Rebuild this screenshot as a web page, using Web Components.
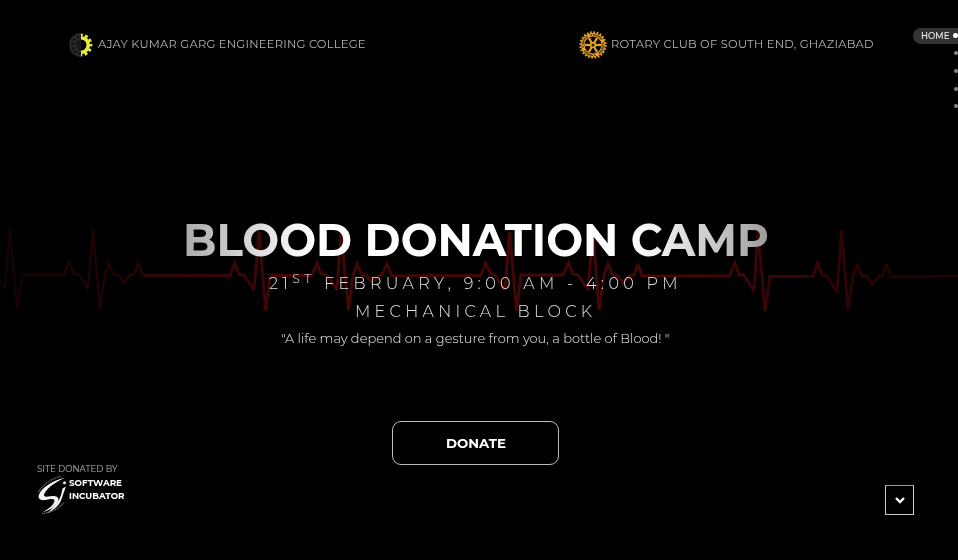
<!DOCTYPE html>
<html lang="en">
<head>
<meta charset="utf-8">
<title>Blood Donation Camp</title>
<style>
html,body{margin:0;background:#000;color:#fff;font-family:Montserrat,Inter,"Open Sans",sans-serif}
body{width:958px;height:560px;overflow:hidden}
</style>
</head>
<body>
<camp-page></camp-page>
<script>
// A single line of text set to a given width; `cap` is the height of its box, whose bottom is the baseline.
// With `tracked`, only the letter spacing grows. A part marked ^...^ is raised and smaller.
class FitText extends HTMLElement{
  connectedCallback(){
    const w=+this.getAttribute('w'), h=+this.getAttribute('cap');
    const root=this.attachShadow({mode:'open'});
    root.innerHTML=`<style>:host{display:block;flex:none;will-change:transform}svg{display:block;overflow:visible}text{fill:var(--ink,currentColor)}</style>
    <svg width="${w}" height="${h}"><defs><linearGradient id="fade" gradientUnits="userSpaceOnUse" x1="0" y1="0" x2="${w}" y2="0"><stop offset="0" stop-color="#a9a9a9"/><stop offset=".1" stop-color="#d2d2d2"/><stop offset=".22" stop-color="#fff"/><stop offset=".77" stop-color="#fff"/><stop offset=".9" stop-color="#ccc"/><stop offset="1" stop-color="#9b9b9b"/></linearGradient></defs><text x="0" y="${h}" textLength="${w}" lengthAdjust="${this.hasAttribute('tracked')?'spacing':'spacingAndGlyphs'}"></text></svg>`;
    const t=root.querySelector('text');
    this.getAttribute('text').split('^').forEach((s,i)=>{
      if(!i){t.append(s);return}
      const sp=document.createElementNS('http://www.w3.org/2000/svg','tspan');
      sp.textContent=s; sp.setAttribute('dy',i%2?-6.5:6.5);
      if(i%2) sp.setAttribute('font-size','12.5');
      t.append(sp);
    });
  }
}
class CollegeGear extends HTMLElement{
  connectedCallback(){this.attachShadow({mode:'open'}).innerHTML=`<style>:host{display:block}svg{display:block}</style>
  <svg width="25" height="24" viewBox="0 0 25 24"><defs><clipPath id="l"><path d="M0 0h12v24H0z"/></clipPath><clipPath id="r"><path d="M12 0H25v24H12z"/></clipPath></defs>
  <g clip-path="url(#l)"><circle cx="12" cy="12" r="11.900" fill="#292929"/><circle cx="12" cy="12" r="8.700" fill="none" stroke="#0d0d0d" stroke-width="2" stroke-dasharray="2.28 2.28"/><circle cx="12" cy="12" r="5.600" fill="#1b1b1b"/></g>
  <g clip-path="url(#r)" fill="none" stroke="#e9ee3c"><circle cx="12" cy="12" r="7.300" stroke-width="3.600"/><circle cx="12" cy="12" r="10" stroke-width="2.800" stroke-dasharray="2.900 2.336" stroke-dashoffset="1.450"/></g></svg>`}
}
class RotaryWheel extends HTMLElement{
  connectedCallback(){
    let sp='';for(let i=0;i<6;i++)sp+=`<path d="M-.9 -2.500L-1.300 -8h2.600L.9 -2.500z" transform="rotate(${i*60+30})"/>`;
    this.attachShadow({mode:'open'}).innerHTML=`<style>:host{display:block}svg{display:block}</style>
    <svg width="28" height="28" viewBox="-14 -14 28 28"><g fill="none" stroke="#e8a528"><circle r="12.700" stroke-width="2" stroke-dasharray="1.700 1.625"/><circle r="10.200" stroke-width="3.500"/><circle r="10.200" stroke="#604416" stroke-width="1.600" stroke-dasharray="10 3 2 1.020"/></g><g fill="#e8a528">${sp}<circle r="3.200"/></g><circle r="1.500" fill="#241804"/></svg>`}
}
class PulseLine extends HTMLElement{
  connectedCallback(){this.attachShadow({mode:'open'}).innerHTML=`<style>:host{display:block;position:absolute;left:0;top:0;z-index:-1}svg{display:block}</style>
  <svg width="958" height="560"><defs><linearGradient id="g" gradientUnits="userSpaceOnUse" x1="0" y1="0" x2="958" y2="0"><stop offset="0" stop-color="#180202"/><stop offset=".15" stop-color="#2b0504"/><stop offset=".3" stop-color="#430706"/><stop offset=".7" stop-color="#460706"/><stop offset=".85" stop-color="#330504"/><stop offset="1" stop-color="#160202"/></linearGradient></defs>
  <g fill="none" stroke="url(#g)" stroke-miterlimit="3"><path stroke-width="2" d="M-1 280L5 288L10 229L17 308L22 275L64 274.500L69 262L74 274L79 274.500L88 289.500L93 229L100 308L105 275L109 264L114 275L119 275.500L124 283L130 275L134 274.500L138.500 263L143 275.500"/><path stroke-width="2.800" d="M142.500 275.500H230L234.700 263L239 274.500L244 275L254 290L259 231L265.700 311L270 275.500L312 275.500L317 263L321 274L327 275L337 290L341 233L348.500 310L353 275L357 264L362 275L367 275.500L371.500 283L378 276L382 275L387 264L392 276L481 275.500L485.500 263L491 274L495 275L505 290L509.500 232L516.500 311L521 275H563L568.500 263L573 274L578 275L588 290L593 232L599 310L604 275L608 264L613 275L618 276L623 283L629 276L634 275L638 264L642 276H729.500L735 263L739 275L744 275L754 291L758 231L765 311L770 276.500H813L817.500 263L822 275L827 276L837 292L841.500 230L848 310L853 276L857.500 265L862 276H867L872 285L878 277L882 276L886.500 265L891 277L958 276"/></g></svg>`}
}
class SectionDots extends HTMLElement{
  connectedCallback(){this.attachShadow({mode:'open'}).innerHTML=`<style>:host{position:absolute;right:0;top:28px;width:45px;overflow:hidden;display:flex;flex-direction:column;align-items:flex-end}
  .on{display:flex;align-items:center;justify-content:space-between;box-sizing:border-box;height:16px;width:45px;padding:0 0 1px 8px;background:#333;border-radius:8px 0 0 8px;font-size:9.200px;font-weight:500;--ink:#eee;margin-bottom:7px}
  fit-text{padding-bottom:.5px}
  i{display:block;flex:none;width:4px;height:4px;border-radius:50%;background:#848484;margin:0 .5px 13.800px 0}.on i{width:4.600px;height:4.600px;background:#fff;margin:0 .2px 0 0}</style>
  <div class="on"><fit-text text="HOME" w="28.500" cap="6.500"></fit-text><i></i></div><i></i><i></i><i></i><i></i>`}
}
class IncubatorCredit extends HTMLElement{
  connectedCallback(){this.attachShadow({mode:'open'}).innerHTML=`<style>:host{display:block;font-size:9px}
  .lead{--ink:#b8b8b8;font-weight:400}.row{display:flex;gap:1px;padding-top:4px}.name{display:flex;flex-direction:column;gap:6.500px;padding-top:4px;font-weight:700}svg{display:block}</style>
  <fit-text class="lead" text="SITE DONATED BY" w="80.500" cap="6.500"></fit-text>
  <div class="row"><svg width="31" height="40" viewBox="0 0 31 40"><g fill="#f3f3f3"><path d="M28 2.500C17 5 5 12 2 19.500C0 25 5 26 11 24.500C16 23.500 18.500 24 17 27.500C15.500 31 11 34 6 37C15 34.500 21.500 29 21.500 24.500C21.500 20.500 16 20.500 11 21.500C7 22.300 6 20.500 8 17.500C12 11.500 19 7 28 2.500Z"/><path d="M29 11.500L25.500 13.500Q24.500 20 22 25Q18 32 10 38Q22 33 25 23Q26.500 18 29 11.500Z"/><circle cx="27.500" cy="7.800" r="1.500"/></g><g fill="none" stroke="#777" stroke-width="1.300" stroke-dasharray="1 .7"><path d="M1.500 17Q8 6 24 1"/><path d="M5 38.500Q20 37 27 27"/></g></svg>
  <div class="name"><fit-text text="SOFTWARE" w="53" cap="6.500"></fit-text><fit-text text="INCUBATOR" w="55.500" cap="6.500"></fit-text></div></div>`}
}
class CampPage extends HTMLElement{
  connectedCallback(){this.attachShadow({mode:'open'}).innerHTML=`<style>
  :host{display:flex;flex-direction:column;position:relative;z-index:0;box-sizing:border-box;width:958px;height:560px;overflow:hidden;background:#000}
  header{display:flex;justify-content:space-between;padding:31px 85px 0 69px;height:28px;font-size:11.500px;font-weight:400;--ink:#b4b4b4;align-items:center}
  .org{display:flex;align-items:center;gap:4px}.org fit-text{padding-bottom:2px}
  main{display:flex;flex-direction:column;padding-top:166px}
  h1,p{margin:0}
  h1{padding-left:182.500px;font-size:44.800px;font-weight:700}
  h1 fit-text{--ink:url(#fade)}
  .when,.where{font-size:16px;font-weight:300;--ink:#e4e4e4}
  .when{padding:22px 0 0 269px}.where{padding:16px 0 0 355px}
  .quote{padding:16px 0 0 281px;font-size:13.200px;font-weight:300;--ink:#f0f0f0}
  button{margin:79px 0 0 392px;width:167px;height:43.500px;box-sizing:border-box;padding:2px 0 0;border:1px solid #bbb;border-radius:9px;background:#000;color:#fff;display:flex;align-items:center;justify-content:center;font:700 12.800px Montserrat,Inter,sans-serif}
  footer{display:flex;justify-content:space-between;padding:0 44px 0 37px}
  .next{display:flex;align-items:center;justify-content:center;box-sizing:border-box;width:29px;height:30px;margin-top:20.500px;border:1px solid #ccc;border-top-color:#999}
  .next svg{display:block}
  </style>
  <pulse-line></pulse-line>
  <header><div class="org"><college-gear></college-gear><fit-text tracked text="AJAY KUMAR GARG ENGINEERING COLLEGE" w="267.500" cap="8"></fit-text></div>
  <div class="org"><rotary-wheel></rotary-wheel><fit-text tracked text="ROTARY CLUB OF SOUTH END, GHAZIABAD" w="262.500" cap="8"></fit-text></div></header>
  <main><h1><fit-text text="BLOOD DONATION CAMP" w="586" cap="31"></fit-text></h1>
  <p class="when"><fit-text tracked text="21^ST^ FEBRUARY, 9:00 AM - 4:00 PM" w="408.500" cap="11"></fit-text></p>
  <p class="where"><fit-text tracked text="MECHANICAL BLOCK" w="237" cap="11.500"></fit-text></p>
  <p class="quote"><fit-text text="&quot;A life may depend on a gesture from you, a bottle of Blood! &quot;" w="388.500" cap="9.500"></fit-text></p>
  <button><fit-text text="DONATE" w="60" cap="9"></fit-text></button></main>
  <footer><incubator-credit></incubator-credit><div class="next"><svg width="10" height="8" viewBox="0 0 10 8"><path d="M1 2L5 6L9 2" fill="none" stroke="#fff" stroke-width="2.400"/></svg></div></footer>
  <section-dots></section-dots>`}
}
customElements.define('fit-text',FitText);
customElements.define('college-gear',CollegeGear);
customElements.define('rotary-wheel',RotaryWheel);
customElements.define('pulse-line',PulseLine);
customElements.define('section-dots',SectionDots);
customElements.define('incubator-credit',IncubatorCredit);
customElements.define('camp-page',CampPage);
</script>
</body>
</html>
